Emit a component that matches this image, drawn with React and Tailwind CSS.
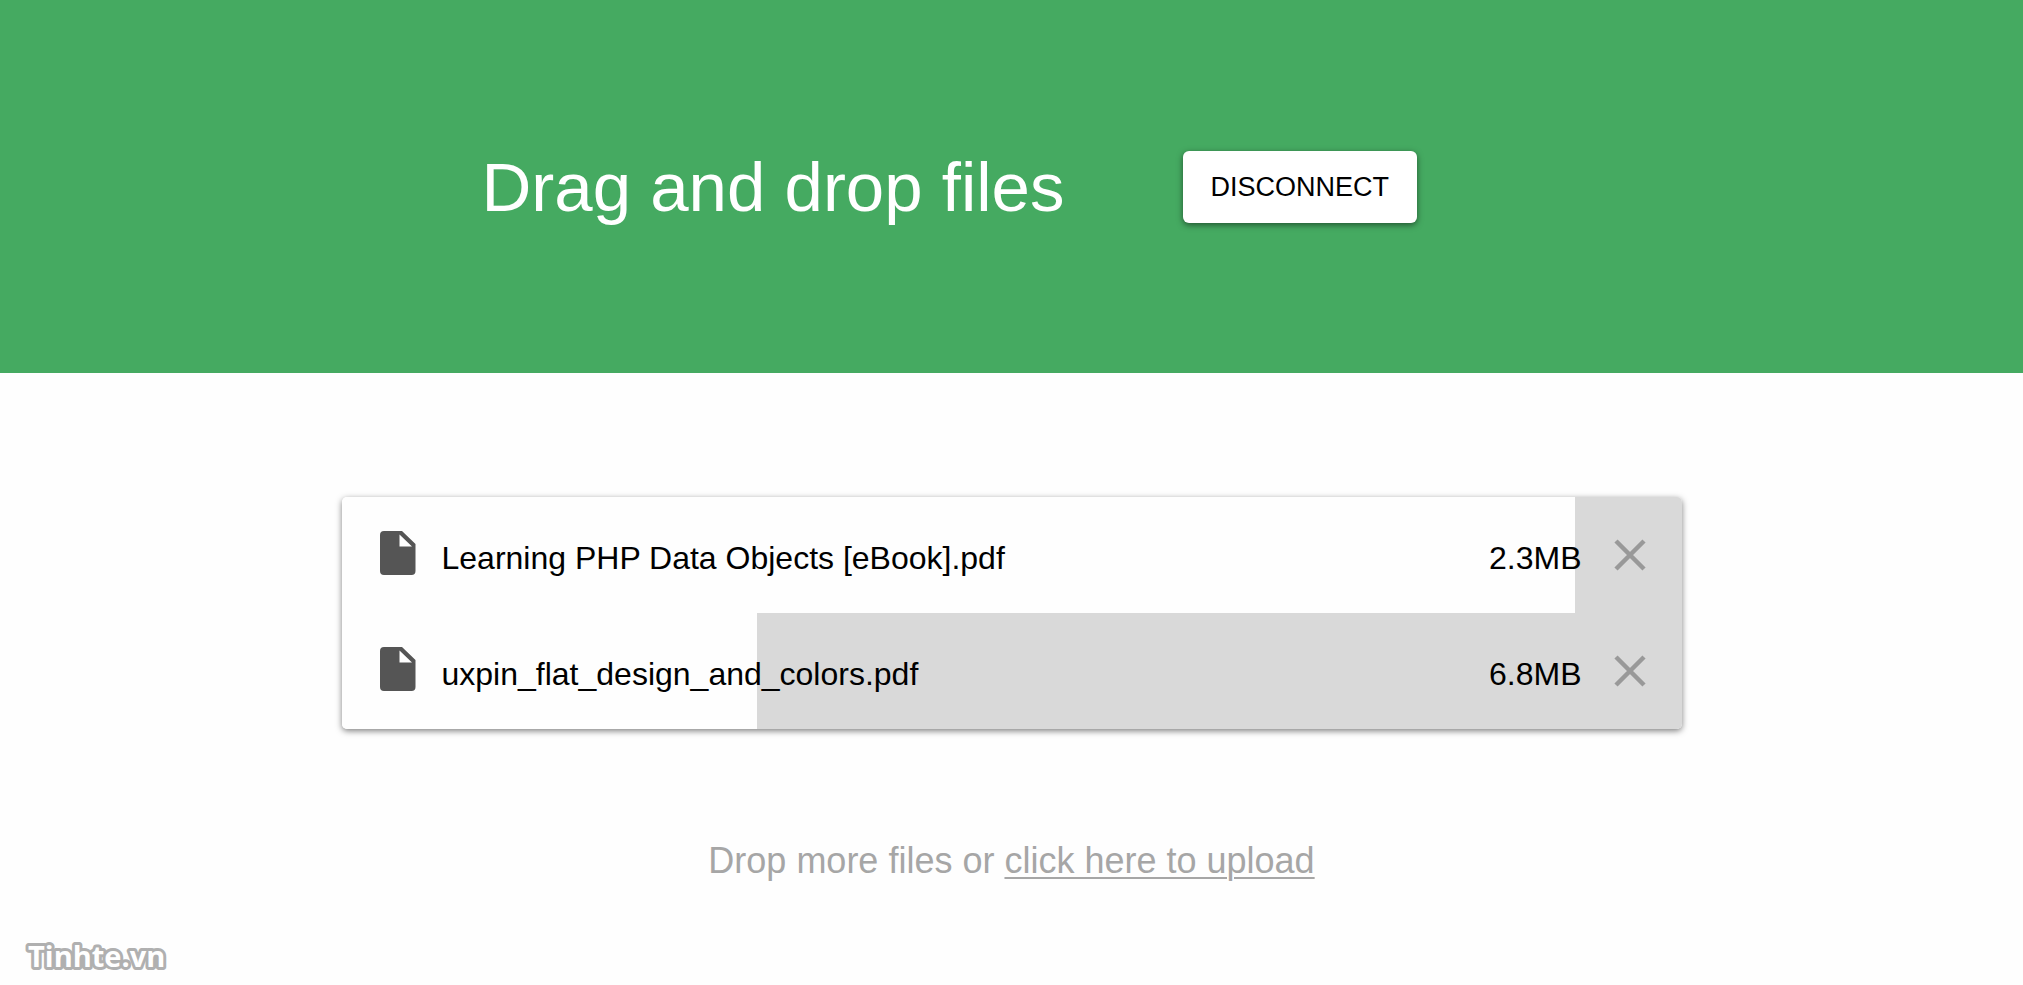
import { useState } from "react";

const initialFiles = [
  { id: 1, name: "Learning PHP Data Objects [eBook].pdf", size: "2.3MB", progress: 92 },
  { id: 2, name: "uxpin_flat_design_and_colors.pdf", size: "6.8MB", progress: 31 },
];

const FileIcon = () => (
  <svg width="36" height="44" viewBox="0 0 36 44" className="shrink-0 fill-[#555555]" aria-hidden="true">
    <path
      fillRule="evenodd"
      d="M4 0H22L35.5 13V40A4 4 0 0 1 31.5 44H4A4 4 0 0 1 0 40V4A4 4 0 0 1 4 0ZM19.5 3.5V15.5H32Z"
    />
  </svg>
);

const CloseIcon = () => (
  <svg width="32" height="32" viewBox="0 0 32 32" className="stroke-[#999999]" aria-hidden="true">
    <path d="M2 2L30 30M30 2L2 30" strokeWidth="4.5" fill="none" />
  </svg>
);

const Watermark = () => (
  <svg width="156" height="40" className="font-['Open_Sans',sans-serif] text-[29px] font-bold">
    <text
      x="8"
      y="30"
      fill="#ffffff"
      stroke="#b0b0b0"
      strokeWidth="6"
      strokeLinejoin="round"
      paintOrder="stroke"
    >
      Tinhte.vn
    </text>
  </svg>
);

const FileRow = ({ file, onRemove }) => {
  // white part is what has been uploaded so far
  const background = `linear-gradient(to right, #fefefe ${file.progress}%, #d9d9d9 ${file.progress}%)`;

  return (
    <li className="flex h-[116px] items-center pl-[38px] pr-9" style={{ background }}>
      <div className="pb-1">
        <FileIcon />
      </div>
      <span className="flex-1 truncate pl-[26px] pt-1.5 text-[32px] leading-[48px]">{file.name}</span>
      <span className="pt-1.5 text-[32px] leading-[48px]">{file.size}</span>
      <button
        type="button"
        aria-label={`Remove ${file.name}`}
        onClick={() => onRemove(file.id)}
        className="ml-8 cursor-pointer pb-px"
      >
        <CloseIcon />
      </button>
    </li>
  );
};

const App = () => {
  const [files, setFiles] = useState(initialFiles);

  const handleRemove = (id) => {
    setFiles(files.filter((file) => file.id !== id));
  };

  return (
    <div className="flex min-h-screen flex-col bg-[#fefefe] font-['Liberation_Sans',Arial,sans-serif] text-black">
      <header className="bg-[#45aa61] py-[134px]">
        <div className="mx-auto flex max-w-[1340px] items-center gap-[118px] pl-[140px]">
          <h1 className="pt-0.5 text-[69px] leading-[103px] text-white">Drag and drop files</h1>
          <button
            type="button"
            className="h-[72px] cursor-pointer rounded-md bg-white px-7 pt-0.5 text-[27px] shadow-[0_2px_6px_rgba(0,0,0,0.5)]"
          >
            DISCONNECT
          </button>
        </div>
      </header>

      <main className="pt-[124px]">
        <ul className="mx-auto max-w-[1340px] overflow-hidden rounded-[5px] shadow-[0_2px_6px_rgba(0,0,0,0.5)]">
          {files.map((file) => (
            <FileRow key={file.id} file={file} onRemove={handleRemove} />
          ))}
        </ul>
        <p className="mt-[108px] text-center text-[36px] leading-[48px] text-[#a6a6a6]">
          Drop more files or{" "}
          <a href="#upload" className="underline decoration-2 underline-offset-4">
            click here to upload
          </a>
        </p>
      </main>

      <footer className="mt-auto px-5 pb-2">
        <Watermark />
      </footer>
    </div>
  );
};

export default App;
